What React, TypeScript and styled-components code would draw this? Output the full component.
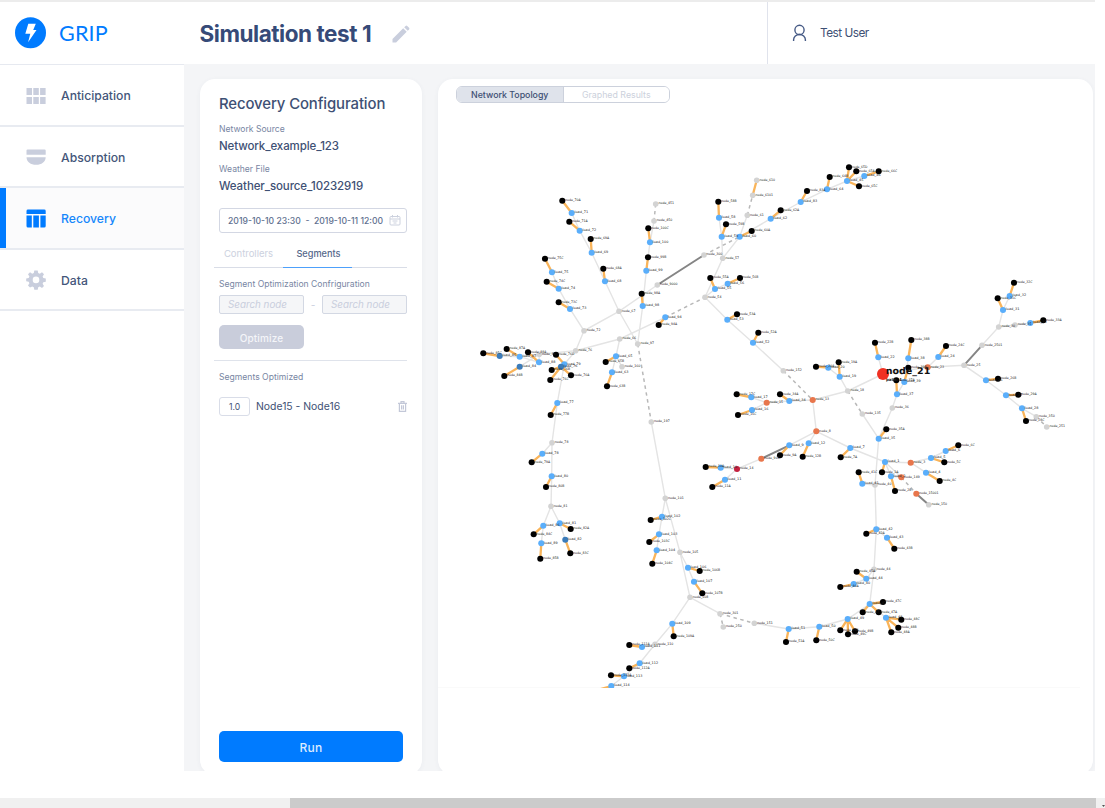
import React from "react";
import styled, { createGlobalStyle, css } from "styled-components";

const GlobalStyle = createGlobalStyle`
  * { box-sizing: border-box; }
  body { margin: 0; background: #fff; font-family: Inter, "Liberation Sans", sans-serif; color: #3e5074; }
`;

const Page = styled.div`
  display: flex;
  flex-direction: column;
  width: 1105px;
  height: 808px;
  overflow: hidden;
  background: #fff;
`;
const WindowEdge = styled.div`
  width: 1095px;
  height: 2px;
  flex: none;
  background: #ececec;
`;
const Header = styled.header`
  display: flex;
  flex: none;
  width: 1095px;
  height: 62px;
`;
const Brand = styled.div`
  display: flex;
  align-items: center;
  gap: 12px;
  width: 184px;
  padding-left: 15px;
  color: #007bff;
  font: 400 21.5px/24px Lato, sans-serif;
  letter-spacing: 0.2px;
`;
const TitleArea = styled.div`
  display: flex;
  align-items: center;
  gap: 21px;
  width: 584px;
  padding: 1px 0 0 15.5px;
  border-right: 1px solid #e0e3ec;
`;
const Title = styled.h1`
  margin: 0;
  font-size: 22.5px;
  line-height: 28px;
  font-weight: 700;
  letter-spacing: -0.45px;
  color: #364a78;
`;
const User = styled.div`
  display: flex;
  align-items: center;
  gap: 13px;
  padding-left: 24px;
  font-size: 11.8px;
  letter-spacing: -0.5px;
`;
const Body = styled.div`
  display: flex;
  flex: none;
  width: 1095px;
  height: 707px;
`;
const Sidebar = styled.nav`
  width: 184px;
  border-top: 1px solid #e6e9f0;
`;
const NavItem = styled.a<{ $active?: boolean }>`
  display: flex;
  align-items: center;
  gap: 15px;
  height: 61.5px;
  padding: 1.5px 0 0 26px;
  border-bottom: 2px solid #e8ebf1;
  font-size: 12.2px;
  font-weight: 500;
  color: #44567a;
  svg { fill: #c9cedd; }
  ${(p) =>
    p.$active &&
    css`
      box-shadow: inset 6px 0 #007bff;
      background: #fbfbfc;
      color: #1687fb;
      svg { fill: #007bff; }
    `}
`;
const Main = styled.main`
  display: flex;
  flex: 1;
  gap: 16px;
  padding: 15px 2px 0 16px;
  overflow: hidden;
  background: #f4f5f7;
`;
const Card = styled.section`
  display: flex;
  flex-direction: column;
  height: 696px;
  background: #fff;
  border-radius: 15px;
  box-shadow: 0 1px 5px rgba(60, 70, 110, 0.05);
`;
const ConfigCard = styled(Card)`
  flex: none;
  width: 222px;
  padding: 15px 15px 13px 19px;
`;
const CardTitle = styled.h2`
  margin: 0;
  padding-top: 1px;
  font-size: 14.9px;
  line-height: 19px;
  letter-spacing: -0.1px;
  font-weight: 500;
`;
const Caption = styled.div<{ $top: number }>`
  margin-top: ${(p) => p.$top}px;
  font-size: 8.6px;
  line-height: 10px;
  color: #7886a3;
`;
const Value = styled.div`
  margin-top: 5px;
  font-size: 11.5px;
  line-height: 14px;
  letter-spacing: -0.1px;
  font-weight: 500;
`;
const DateRange = styled.div`
  display: flex;
  align-items: center;
  justify-content: space-between;
  height: 25px;
  margin-top: 15px;
  padding: 0 5px 0 8px;
  border: 1px solid #d3d7e3;
  border-radius: 3px;
  font-size: 8.65px;
  font-weight: 500;
  white-space: pre;
  color: #60708f;
`;
const TabBar = styled.div`
  display: flex;
  height: 23px;
  margin: 12px 0 0 -5px;
  border-bottom: 1px solid #d9dde7;
`;
const Tab = styled.div<{ $active?: boolean }>`
  width: 69px;
  height: 23px;
  padding-left: ${(p) => (p.$active ? 2 : 0)}px;
  line-height: 17px;
  font-size: ${(p) => (p.$active ? 9.2 : 9.5)}px;
  text-align: center;
  font-weight: ${(p) => (p.$active ? 500 : 400)};
  color: ${(p) => (p.$active ? "#56678a" : "#ccd1de")};
  border-bottom: 1px solid ${(p) => (p.$active ? "#4da0fb" : "transparent")};
`;
const NodeRange = styled.div`
  display: flex;
  align-items: center;
  justify-content: space-between;
  margin-top: 6px;
  font-size: 10px;
  color: #c9cedd;
`;
const NodeField = styled.div`
  width: 85px;
  height: 19px;
  padding-left: 8px;
  border: 1px solid #d3d8e3;
  border-radius: 2px;
  background: #f5f6f8;
  font-size: 9.8px;
  line-height: 18px;
  font-style: italic;
`;
const OptimizeButton = styled.button`
  width: 85px;
  height: 24px;
  margin-top: 11px;
  padding: 2px 0 0;
  border: 0;
  border-radius: 5px;
  background: #c9cddb;
  font: 500 10px Inter, sans-serif;
  letter-spacing: 0.15px;
  color: #f4f5f9;
`;
const Divider = styled.div`
  flex: none;
  height: 1px;
  margin: 11px 0 0 -5px;
  background: #dfe3eb;
`;
const SegmentRow = styled.div`
  display: flex;
  align-items: center;
  margin-top: 15px;
  font-size: 10.4px;
  > svg { margin-left: auto; }
`;
const Weight = styled.div`
  width: 31px;
  height: 19px;
  margin-right: 6px;
  border: 1px solid #d9dde8;
  border-radius: 3px;
  font-size: 8.6px;
  line-height: 18px;
  text-align: center;
`;
const RunButton = styled.button`
  width: 184px;
  height: 31px;
  margin-top: auto;
  padding: 2px 0 0;
  border: 0;
  border-radius: 5px;
  background: #007bff;
  font: 500 12px Inter, sans-serif;
  letter-spacing: 0.2px;
  color: #dcebff;
`;
const GraphCard = styled(Card)`
  flex: 1;
  padding-top: 7px;
`;
const Toggle = styled.div`
  display: flex;
  flex: none;
  width: 214px;
  height: 17px;
  margin: 0 0 1px 18px;
  border: 1px solid #ccd1dc;
  border-radius: 6px;
  overflow: hidden;
`;
const ToggleOption = styled.div<{ $active?: boolean }>`
  flex: 1;
  font-size: 8.8px;
  line-height: 15px;
  text-align: center;
  font-weight: ${(p) => (p.$active ? 500 : 400)};
  color: ${(p) => (p.$active ? "#3e5074" : "#ccd1dc")};
  background: ${(p) => (p.$active ? "#dfe3eb" : "#fff")};
  border-right: ${(p) => (p.$active ? "1px solid #ccd1dc" : "0")};
`;
const GraphSvg = styled.svg`
  display: block;
  flex: none;
  width: 655px;
  height: 584px;
  font-family: "DejaVu Sans", sans-serif;
  text-rendering: geometricPrecision;
`;
const ScrollTrack = styled.div`
  display: flex;
  justify-content: space-between;
  align-items: flex-end;
  flex: none;
  height: 10px;
  margin-top: auto;
  padding-left: 290px;
  background: #f0f0f0;
`;
const ScrollThumb = styled.div`
  width: 806px;
  height: 10px;
  background: #cbcbcb;
`;

type Kind = "k" | "b" | "d" | "g" | "o" | "r";
type GraphNode = [string, Kind, number, number];

const fills: Record<Kind, string> = {
  k: "#000", b: "#5aaefb", d: "#3c7cba", g: "#d3d3d3", o: "#e8764c", r: "#c4213f",
};

const nodes: GraphNode[] = [
  ["node_70A", "k", 562.3, 200.7], ["load_71", "b", 571.7, 213], ["node_71A", "k", 569.3, 221.7], ["load_72", "b", 579.7, 230.7],
  ["node_69A", "k", 590.7, 239], ["load_69", "b", 591.7, 252.7], ["node_68A", "k", 603.3, 268.7], ["load_68", "b", 605, 281.3],
  ["node_67", "g", 619, 311.3], ["node_75C", "k", 545, 258.7], ["load_75", "b", 552, 272.3], ["node_74C", "k", 546.7, 281.7],
  ["load_74", "b", 558.7, 288.7], ["node_73C", "k", 558.7, 302.3], ["load_73", "b", 570, 309], ["node_72", "g", 584, 330.7],
  ["node_76", "g", 575.7, 350.7], ["node_66", "g", 619.7, 339], ["node_85C", "k", 483.3, 353.3], ["load_85", "d", 499.7, 356],
  ["node_87A", "k", 506.7, 349], ["load_87", "b", 519.7, 356.7], ["node_84B", "k", 504.3, 376], ["load_84", "d", 519.7, 366.7],
  ["node_88A", "k", 528, 352.3], ["load_88", "b", 539, 362.3], ["node_86", "g", 539.3, 354.3], ["node_76D", "k", 556, 354.7],
  ["load_79", "b", 564.3, 364.3], ["load_76", "d", 561, 366.7], ["node_76B", "k", 551.7, 370], ["node_76C", "k", 550.3, 380],
  ["node_76A", "k", 571, 375.3], ["load_65", "b", 616, 356.3], ["node_65B", "k", 605.7, 362], ["load_63", "b", 612, 372.3],
  ["node_63B", "k", 607, 386.3], ["node_160", "g", 622, 366.7],
  ["node_451", "g", 655.7, 204], ["node_450", "g", 654, 221], ["node_100C", "k", 648.3, 228.3], ["load_100", "b", 650, 242.3],
  ["node_99B", "k", 648, 257.3], ["load_99", "b", 646.3, 270.7], ["node_9000", "g", 657.3, 285], ["node_300", "g", 704, 255],
  ["node_98A", "k", 641.7, 293.7], ["load_98", "b", 642.7, 306], ["load_94", "b", 665.3, 317.3], ["node_94A", "k", 658.7, 325],
  ["node_54", "g", 705, 297.3], ["node_97", "g", 637.7, 344], ["node_58B", "k", 718.3, 201.7], ["load_58", "b", 719, 217.7],
  ["node_59B", "k", 726, 224.3], ["load_59", "b", 721.7, 236.7], ["node_57", "g", 722.7, 258.3], ["load_60", "b", 739.7, 236.7],
  ["node_60A", "k", 751.7, 231], ["node_61", "g", 747.3, 215.3], ["node_6101", "g", 752.7, 195.3], ["node_610", "g", 756.7, 180.3],
  ["load_62", "b", 770.7, 218.7], ["node_62A", "k", 780.7, 210.3], ["node_55A", "k", 710.3, 278], ["load_55", "b", 715, 289],
  ["load_56", "b", 727.7, 283.7], ["node_56B", "k", 740, 278], ["load_53", "b", 727.3, 319.7], ["node_53A", "k", 737, 314.3],
  ["load_52", "b", 753, 342.7], ["node_52A", "k", 758.3, 332.7],
  ["load_83", "b", 800.7, 202], ["node_83A", "k", 807, 191], ["load_64", "b", 827, 189.3], ["node_64B", "k", 829.7, 177],
  ["load_45", "b", 847, 181], ["node_65D", "k", 849, 167.3], ["node_65A", "k", 856.3, 171.3], ["load_46", "b", 864.3, 176],
  ["node_66C", "k", 878.7, 171.3], ["node_65C", "k", 859, 186.3],
  ["node_152", "g", 783.3, 370.7], ["node_22B", "k", 875, 342.7], ["load_22", "b", 878.3, 357.3], ["node_20A", "k", 816, 366.7],
  ["load_20", "b", 828.3, 367.7], ["node_19A", "k", 838.7, 362.3], ["load_19", "b", 839.7, 376.7],
  ["node_32C", "k", 1014, 282.7], ["load_32", "b", 1009.7, 296], ["node_31C", "k", 997.7, 298.3], ["load_31", "b", 1003, 310],
  ["node_30", "g", 998.7, 327], ["node_35", "g", 1015, 325], ["load_33", "b", 1030.3, 323], ["node_33A", "k", 1043.3, 320.3],
  ["node_2501", "g", 982, 345.3], ["node_25", "g", 964, 365.3], ["node_24C", "k", 946, 346], ["load_24", "b", 938.3, 357],
  ["node_38B", "k", 911.3, 340], ["load_38", "b", 908.3, 358.3], ["node_23", "o", 927.7, 367.3], ["node_39B", "k", 908.3, 367.7],
  ["load_39", "b", 904.3, 382], ["node_37A", "k", 896.3, 380.3], ["load_37", "b", 897, 394.3], ["node_36", "g", 892.3, 408],
  ["node_35A", "k", 886.3, 429.3], ["load_35", "b", 878.7, 438.7], ["load_26", "b", 986, 380.3], ["node_26B", "k", 998, 378.7],
  ["load_27", "b", 1006, 395.3], ["node_29A", "k", 1018.3, 394.7], ["load_28", "b", 1022, 408.3], ["node_28C", "k", 1026, 421],
  ["node_350", "g", 1036.3, 416.7], ["node_251", "g", 1046.7, 427],
  ["load_1", "b", 885, 462], ["node_1A", "k", 882, 472.3], ["load_2", "b", 891, 476.3], ["node_149", "o", 901.3, 477.3],
  ["node_2B", "k", 895, 491], ["node_3", "o", 910.7, 462.7], ["load_5", "b", 931, 458], ["node_5C", "k", 944.3, 462.3],
  ["load_6", "b", 945.7, 451], ["node_6C", "k", 958.3, 445.3], ["load_4", "b", 926, 472.7], ["node_4C", "k", 939.7, 481],
  ["node_15001", "o", 916.3, 493.7], ["node_150", "g", 928.7, 504.7], ["node_40", "g", 875, 485],
  ["node_13", "o", 812.7, 400], ["node_18", "g", 847.7, 391], ["node_135", "g", 862.3, 414], ["node_17C", "k", 736.7, 394.3],
  ["load_17", "b", 751.3, 397.3], ["node_15", "o", 766.7, 402.7], ["node_16C", "k", 738, 415], ["load_16", "b", 752, 410],
  ["node_34A", "k", 780, 394.3], ["load_34", "b", 789.3, 401], ["node_8", "o", 816.3, 431.3], ["load_9", "b", 789.3, 445.3],
  ["node_9A", "k", 780, 455.3], ["load_12", "b", 808.7, 443.3], ["node_12B", "k", 802.7, 456.7], ["node_901", "o", 761.3, 458.7],
  ["node_14", "r", 737, 469], ["node_10A", "k", 705.7, 467], ["load_10", "b", 720.7, 467.7], ["load_11", "b", 725, 479.7],
  ["node_11A", "k", 712.3, 487], ["load_7", "b", 850.3, 448], ["node_7A", "k", 840.7, 457.3], ["node_41C", "k", 858.7, 472.3],
  ["load_41", "b", 862.3, 483.7],
  ["load_77", "b", 557.3, 403], ["node_77B", "k", 550.7, 415], ["node_78", "g", 552, 442.7], ["load_78", "b", 542.3, 453.7],
  ["node_79A", "k", 531.7, 462.3], ["load_80", "b", 551.7, 476.3], ["node_80B", "k", 546, 487], ["node_81", "g", 551, 506.3],
  ["load_86", "b", 543.3, 525.7], ["node_84C", "k", 533.7, 534.3], ["load_89", "b", 541.3, 543.3], ["node_85B", "k", 540.3, 558.7],
  ["load_81", "b", 559.7, 523.3], ["node_82A", "k", 570.7, 529], ["load_82", "d", 565.3, 539.7], ["node_83C", "k", 570.3, 553.3],
  ["node_197", "g", 651.3, 422], ["node_101", "g", 665.3, 498.3], ["load_102", "b", 662, 516.7], ["node_102C", "k", 650.7, 520],
  ["load_103", "b", 659, 534.3], ["node_103C", "k", 649.3, 542], ["load_104", "b", 656.7, 550.3], ["node_104C", "k", 652.3, 563.7],
  ["node_105", "g", 680, 552.3], ["load_106", "b", 688, 567.7], ["node_106B", "k", 699.7, 571], ["load_107", "b", 694, 581.7],
  ["node_107B", "k", 702.3, 593.3], ["node_108", "g", 690, 597.3], ["load_109", "b", 672.3, 623.7], ["node_109A", "k", 673.7, 636.3],
  ["node_111A", "k", 629.3, 645], ["load_111", "b", 642, 647], ["node_110", "g", 655, 644.3], ["load_112", "b", 639.7, 663.3],
  ["node_112A", "k", 629.3, 668.3], ["node_113A", "k", 611, 675.3], ["load_113", "b", 624, 676.3], ["load_114", "b", 611.3, 686],
  ["node_114", "k", 594, 691],
  ["node_301", "g", 720, 613.7], ["node_250", "g", 723.3, 627], ["node_151", "g", 754.3, 623.3],
  ["load_51", "b", 788.7, 629], ["node_51A", "k", 786, 642], ["load_50", "b", 819.3, 626.7], ["node_50C", "k", 816.3, 640.3],
  ["load_49", "b", 847.7, 619], ["node_49A", "k", 840.3, 630.3], ["node_49C", "k", 848, 634.3], ["node_49B", "k", 855, 631.3],
  ["load_47", "b", 869.7, 604], ["node_47C", "k", 883, 602], ["node_47", "k", 862.7, 612.3], ["node_47A", "k", 878.7, 612.3],
  ["load_48", "b", 886, 617.7], ["node_48C", "k", 901.3, 619.7], ["node_48B", "k", 898.3, 627.7], ["node_48A", "k", 891.3, 632.3],
  ["load_42", "b", 876.3, 529.3], ["node_42A", "k", 866.3, 533.7], ["load_43", "b", 887, 537.7], ["node_43B", "k", 894.3, 548.7],
  ["node_44", "g", 874, 569.3], ["node_45A", "k", 856.7, 571.7], ["load_44", "b", 866.3, 578.7], ["load_40", "b", 853.7, 584],
  ["node_46A", "k", 840.3, 587], ["node_21", "r", 883, 374],
];

/* Each path lists the nodes a line runs through, in order. */
const plain = `load_71 load_72 load_69 load_68 node_67 node_97|load_75 load_74 load_73 node_72 node_67 node_9000
node_72 node_76 load_79 load_77 node_78 load_80 node_81 load_86 load_89|node_78 load_78|node_81 load_81 load_82
load_85 load_87 node_86 node_76 node_66 load_94|load_84 node_86|load_87 load_88 node_86|node_66 load_65 load_63|load_65 node_160
node_450 load_100 load_99 load_98 node_97|load_58 load_59 node_57 node_54|node_57 load_60 node_61|load_60 load_62 load_83 load_64 load_45 load_46
node_54 load_55 load_56|node_54 load_53 load_52 node_152|load_22 node_21 node_23 node_25 load_26 load_27 load_28 node_350
node_21 node_18 load_19 load_20|node_18 node_13 node_8|node_13 load_34 node_15 load_17|node_15 load_16
node_8 load_9|node_8 load_12|node_8 load_7 load_1 node_3 load_5 load_6|node_3 load_4|node_901 node_14 load_10|node_14 load_11
node_23 load_24|load_38 load_39 load_37 node_36 load_35 node_40 load_42 load_43|node_135 load_35|load_41 node_40
load_42 node_44 load_47 load_49 load_50 load_51 node_151|node_44 load_44 load_40|load_47 load_48|load_1 load_2 node_149|load_1 node_149
node_2501 node_30 load_31 load_32|node_30 node_35 load_33|node_197 node_101 node_105 node_108 load_109 node_110 load_112 load_113 load_114
node_101 load_102 load_103 load_104|node_105 load_106 load_107|node_108 node_301|node_110 load_111`;
const dashed = `node_451 node_450|node_300 load_60|load_94 node_54|node_97 node_197|node_61 node_6101|node_152 node_13|node_18 node_135
node_149 node_15001|node_350 node_251|node_301 node_151|node_301 node_250`;
const dark = `node_9000 node_300|node_25 node_2501|node_901 load_9|node_15001 node_150`;
const feeders = `node_70A load_71|node_71A load_72|node_69A load_69|node_68A load_68|node_75C load_75|node_74C load_74|node_73C load_73
node_85C load_85|node_87A load_87|node_84B load_84|node_88A load_88|node_76D load_79|node_76B load_76|node_76C load_76|node_76A load_76
node_65B load_65|node_63B load_63|node_100C load_100|node_99B load_99|node_98A load_98|node_94A load_94|node_58B load_58|node_59B load_59
load_60 node_60A|node_6101 node_610|load_62 node_62A|node_55A load_55|load_56 node_56B|load_53 node_53A|load_52 node_52A|load_83 node_83A
load_64 node_64B|load_45 node_65D|load_45 node_65A|load_45 node_65C|load_46 node_66C|node_22B load_22|node_20A load_20|node_19A load_19
node_32C load_32|node_31C load_31|load_33 node_33A|node_24C load_24|node_38B load_38|node_39B load_39|node_37A load_37|node_35A load_35
load_26 node_26B|load_27 node_29A|load_28 node_28C|load_1 node_1A|load_2 node_2B|load_5 node_5C|load_6 node_6C|load_4 node_4C
node_17C load_17|node_16C load_16|node_34A load_34|load_9 node_9A|load_12 node_12B|node_10A load_10|load_11 node_11A|load_7 node_7A
node_41C load_41|load_77 node_77B|load_78 node_79A|load_80 node_80B|load_86 node_84C|load_89 node_85B|load_81 node_82A|load_82 node_83C
load_102 node_102C|load_103 node_103C|load_104 node_104C|load_106 node_106B|load_107 node_107B|load_109 node_109A|node_111A load_111
load_112 node_112A|node_113A load_113|node_114 load_114|load_51 node_51A|load_50 node_50C|load_49 node_49A|load_49 node_49B|load_49 node_49C
load_47 node_47C|load_47 node_47|load_47 node_47A|load_48 node_48A|load_48 node_48B|load_48 node_48C|load_42 node_42A|load_43 node_43B
node_45A load_44|load_40 node_46A`;

const place = new Map(nodes.map(([id, , x, y]) => [id, `${x},${y}`]));
const toPath = (routes: string) =>
  routes
    .split(/[|\n]/)
    .map((r) => "M" + r.trim().split(" ").map((id) => place.get(id)).join("L"))
    .join("");

function NetworkGraph() {
  return (
    <GraphSvg viewBox="438 104 655 584">
      <path d="M438 687.5H1080" stroke="#fafafa" />
      <g fill="none">
        <path d={toPath(plain)} stroke="#e4e4e4" strokeWidth="1.4" />
        <path d={toPath(dashed)} stroke="#b8b8b8" strokeWidth="1.5" strokeDasharray="3.5 3.5" />
        <path d={toPath(dark)} stroke="#858585" strokeWidth="2" />
        <path d={toPath(feeders)} stroke="#f9b45a" strokeWidth="2.3" />
      </g>
      {nodes.filter(([id]) => id !== "node_114").map(([id, kind, x, y]) => (
        <circle key={id} cx={x} cy={y} r={id === "node_21" ? 6 : kind === "g" ? 2.8 : 3.05} fill={id === "node_21" ? "#f03022" : fills[kind]} />
      ))}
      <g fontSize="3.3" fill="#222">
        {nodes.filter(([id]) => id !== "node_21").map(([id, , x, y]) => (
          <text key={id} x={x + 2.8} y={y + 0.2} textLength={id.length * 1.95} lengthAdjust="spacingAndGlyphs">{id}</text>
        ))}
      </g>
      <text x="885.7" y="374.3" fontSize="9.2" fontWeight="700" fill="#111" textLength="44.6" lengthAdjust="spacingAndGlyphs">node_21</text>
      <text x="886" y="380.6" fontSize="4" fontWeight="700" fill="#222">path: 1</text>
    </GraphSvg>
  );
}

export default function App() {
  return (
    <Page>
      <GlobalStyle />
      <WindowEdge />
      <Header>
        <Brand>
          <svg width="32" height="32" viewBox="0 0 32 32">
            <circle cx="15.5" cy="15.7" r="15.5" fill="#007bff" />
            <path d="M13.3 6.8h7.5l-2.6 6.2h3.3L13.1 25.2l2.2-8.4h-5z" fill="#fff" />
          </svg>
          GRIP
        </Brand>
        <TitleArea>
          <Title>Simulation test 1</Title>
          <svg width="18" height="18" viewBox="0 0 18 18" fill="#c9cedd">
            <path d="M.5 17.5v-3.6L11.2 3.3l3.5 3.5L4.1 17.5zM12.2 2.3l1.4-1.4q.8-.7 1.6 0l1.9 1.9q.7.8 0 1.6l-1.4 1.4z" />
          </svg>
        </TitleArea>
        <User>
          <svg width="15" height="18" viewBox="0 0 15 18" fill="none" stroke="#465a85" strokeWidth="1.4">
            <circle cx="7.5" cy="5.9" r="4.6" />
            <path d="M1.6 17v-1.2a5.9 5.3 0 0 1 11.8 0V17" />
          </svg>
          Test User
        </User>
      </Header>
      <Body>
        <Sidebar>
          <NavItem>
            <svg width="20" height="16" viewBox="0 0 20 16">
              <path d="M.5 0H6v7H.5zM7.3 0h5.5v7H7.3zM14.1 0h5.5v7h-5.5zM.5 9H6v7H.5zM7.3 9h5.5v7H7.3zM14.1 9h5.5v7h-5.5z" />
            </svg>
            Anticipation
          </NavItem>
          <NavItem>
            <svg width="20" height="16" viewBox="0 0 20 16">
              <path d="M.5 5.7V1.6Q.5.5 1.6.5h17Q19.7.5 19.7 1.6v4.1zM.5 8.2h19.2C19.5 13 15.5 15.8 10.1 15.8S.7 13 .5 8.2z" />
            </svg>
            Absorption
          </NavItem>
          <NavItem $active>
            <svg width="20" height="19" viewBox="0 0 20 19">
              <path d="M.5 5V2Q.5.6 2 .6h16.2q1.500 0 1.500 1.400v3zM.5 6.500h5.300v12H2Q.5 18.500.5 17zM7.300 6.500h5.600v12H7.300zM14.400 6.500h5.300V17q0 1.500-1.500 1.500h-3.800z" />
            </svg>
            Recovery
          </NavItem>
          <NavItem>
            <svg width="20" height="20" viewBox="0 0 20 20">
              <path fillRule="evenodd" d="M8.300.5h3.400l.5 2.500 1.600.7 2.200-1.500 2 2-1.400 2.300.7 1.500 2.500.5v3.200l-2.500.5-.7 1.600 1.400 2.200-2 2-2.200-1.400-1.600.7-.5 2.500H8.300l-.5-2.500-1.600-.7L4 17.500l-2-2 1.400-2.200-.7-1.600-2.500-.5V8.500L2.700 8l.7-1.500L2 4.200l2-2 2.200 1.500L7.800 3zM10 6.600a3.300 3.300 0 1 0 0 6.600 3.300 3.300 0 0 0 0-6.600z" />
            </svg>
            Data
          </NavItem>
        </Sidebar>
        <Main>
          <ConfigCard>
            <CardTitle>Recovery Configuration</CardTitle>
            <Caption $top={10}>Network Source</Caption>
            <Value>Network_example_123</Value>
            <Caption $top={11}>Weather File</Caption>
            <Value>Weather_source_10232919</Value>
            <DateRange>
              2019-10-10 23:30  -  2019-10-11 12:00
              <svg width="12" height="11" viewBox="0 0 12 11" fill="none" stroke="#ccd1de">
                <rect x="1" y="1.5" width="10" height="8.5" rx="1" />
                <path d="M1 4h10M3.5 0v2.5M8.5 0v2.5M3.5 6h5M4.5 8h3" />
              </svg>
            </DateRange>
            <TabBar>
              <Tab>Controllers</Tab>
              <Tab $active>Segments</Tab>
            </TabBar>
            <Caption $top={11}>Segment Optimization Confriguration</Caption>
            <NodeRange>
              <NodeField>Search node</NodeField>-<NodeField>Search node</NodeField>
            </NodeRange>
            <OptimizeButton>Optimize</OptimizeButton>
            <Divider />
            <Caption $top={11}>Segments Optimized</Caption>
            <SegmentRow>
              <Weight>1.0</Weight>
              Node15 - Node16
              <svg width="9" height="11" viewBox="0 0 9 11" fill="none" stroke="#c3c8d8" strokeWidth="1.2">
                <path d="M0 2.3h9M3 2V.7h3V2M1.4 2.5v7.8h6.2V2.5M3.6 4.2v4.3M5.4 4.2v4.3" />
              </svg>
            </SegmentRow>
            <RunButton>Run</RunButton>
          </ConfigCard>
          <GraphCard>
            <Toggle>
              <ToggleOption $active>Network Topology</ToggleOption>
              <ToggleOption>Graphed Results</ToggleOption>
            </Toggle>
            <NetworkGraph />
          </GraphCard>
        </Main>
      </Body>
      <ScrollTrack>
        <ScrollThumb />
        <svg width="3" height="4" viewBox="0 0 3 4">
          <path d="M0 1h3L1.5 3z" fill="#555" />
        </svg>
      </ScrollTrack>
    </Page>
  );
}
